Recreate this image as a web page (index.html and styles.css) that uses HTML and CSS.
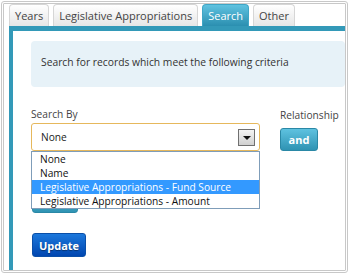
FILE: index.html
```html
<!DOCTYPE html>
<html lang="en">
<head>
    <meta charset="UTF-8">
    <meta name="viewport" content="width=device-width, initial-scale=1.0">
    <title>Search</title>
    <link rel="stylesheet" href="styles.css">
</head>
<body>
    <div class="frame">
        <ul class="tabs">
            <li class="tab">Years</li>
            <li class="tab">Legislative Appropriations</li>
            <li class="tab active">Search</li>
            <li class="tab">Other</li>
        </ul>

        <div class="panel">
            <div class="info">Search for records which meet the following criteria</div>

            <div class="criteria">
                <div class="field search-by">
                    <label class="label">Search By</label>
                    <div class="select">
                        <span>None</span>
                        <span class="arrow"></span>
                    </div>
                    <ul class="options">
                        <li>None</li>
                        <li>Name</li>
                        <li class="selected">Legislative Appropriations - Fund Source</li>
                        <li>Legislative Appropriations - Amount</li>
                    </ul>
                    <!-- hidden behind the open list -->
                    <button class="btn teal add" aria-label="Add"></button>
                </div>
                <div class="field relationship">
                    <label class="label">Relationship</label>
                    <button class="btn teal">and</button>
                </div>
            </div>

            <button class="btn update">Update</button>
        </div>
    </div>
</body>
</html>
```

FILE: styles.css
```css
* {
    box-sizing: border-box;
}

body {
    margin: 0;
    font-family: "Open Sans", "Liberation Sans", sans-serif;
    color: #333;
    background: #fff;
}

.frame {
    margin: 1px;
    width: 347px;
    height: 272px;
    border: 3px double #c8c8c8;
    border-radius: 3px;
    overflow: hidden;
}

/* tabs */
.tabs {
    display: flex;
    gap: 4px;
    margin: 0;
    padding: 0 0 0 5px;
    list-style: none;
    height: 22px;
}

.tab {
    height: 22px;
    padding: 0 5px;
    font-size: 11px;
    line-height: 21px;
    color: #444;
    border: 1px solid #d6d6d6;
    border-bottom: none;
    border-radius: 4px 4px 0 0;
    background: linear-gradient(#ffffff, #e6e6e6);
}

.tab.active {
    color: #fff;
    border-color: #3fa6c6;
    background: linear-gradient(#5fc2e0, #2b8fb0);
}

/* panel */
.panel {
    margin-left: 5px;
    height: 300px;
    padding: 10px 0 0 18px;
    border-top: 5px solid #3399b8;
    border-left: 4px solid #3399b8;
}

.info {
    height: 46px;
    padding: 14px 10px 0;
    font-size: 10.3px;
    background: #e7f2f8;
    border-radius: 4px;
}

.criteria {
    display: flex;
    gap: 20px;
    margin-top: 20px;
}

.field {
    display: flex;
    flex-direction: column;
    align-items: flex-start;
}

.search-by {
    position: relative;
    width: 229px;
}

.label {
    font-size: 10.2px;
    line-height: 14px;
    color: #444;
}

.relationship .label {
    margin-top: 1px;
}

.select {
    display: flex;
    align-items: center;
    justify-content: space-between;
    width: 229px;
    height: 28px;
    margin-top: 2px;
    padding: 0 4px 0 9px;
    font-size: 10.2px;
    color: #222;
    border: 1px solid #e6b85c;
    border-radius: 3px;
}

.arrow {
    position: relative;
    width: 17px;
    height: 17px;
    border: 1px solid #707070;
    background: linear-gradient(#f4f4f4, #d0d0d0);
}

.arrow::after {
    content: "";
    position: absolute;
    left: 4px;
    top: 6px;
    border-left: 4px solid transparent;
    border-right: 4px solid transparent;
    border-top: 4px solid #111;
}

.options {
    position: absolute;
    top: 44px;
    left: 0;
    width: 229px;
    margin: 0;
    padding: 0;
    list-style: none;
    background: #fff;
    border: 1px solid #7f9db9;
    z-index: 2;
}

.options li {
    height: 14px;
    padding-left: 8px;
    font-size: 10.2px;
    line-height: 14px;
    color: #111;
}

.options .selected {
    background: #3399ff;
    color: #fff;
}

/* buttons */
.btn {
    font-family: inherit;
    font-size: 11px;
    font-weight: bold;
    color: #fff;
    border: 1px solid #2a88a6;
    border-radius: 3px;
    cursor: pointer;
}

.teal {
    background: linear-gradient(#5ec2e0, #2f93b3);
}

.relationship .btn {
    width: 38px;
    height: 23px;
    margin-top: 6px;
    padding: 0;
}

.add {
    width: 46px;
    height: 24px;
    margin-top: 38px;
    margin-left: 1px;
}

.update {
    width: 54px;
    height: 24px;
    margin: 20px 0 0 1px;
    padding: 0;
    border-color: #0a4fa8;
    background: linear-gradient(#1c78dc, #0046b0);
    text-shadow: 0 1px 1px rgba(0, 0, 0, 0.4);
}
```
